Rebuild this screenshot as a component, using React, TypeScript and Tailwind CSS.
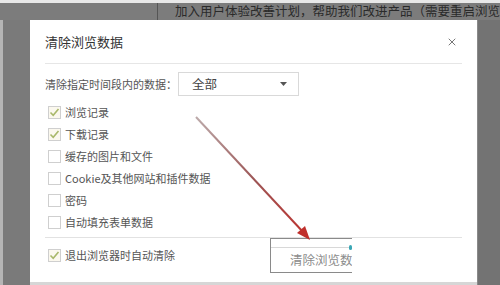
import { X } from 'lucide-react';

const items = [
  { label: '浏览记录', checked: true },
  { label: '下载记录', checked: true },
  { label: '缓存的图片和文件', checked: false },
  { label: 'Cookie及其他网站和插件数据', checked: false },
  { label: '密码', checked: false },
  { label: '自动填充表单数据', checked: false },
];

function Check({ checked }: { checked: boolean }) {
  return (
    <span
      className={`w-[13px] h-[13px] border border-[#cfcfcf] flex items-center justify-center shrink-0 ${
        checked ? 'bg-[#fbf8ee]' : 'bg-white'
      }`}
    >
      {checked && (
        <svg width="11" height="11" viewBox="0 0 11 11">
          <path d="M1.5 5.5 L4.2 8.2 L9.5 2" fill="none" stroke="#a9b86a" strokeWidth="1.6" />
        </svg>
      )}
    </span>
  );
}

export default function App() {
  return (
    <div
      className="w-[500px] h-[285px] bg-[#7c7c7c] relative overflow-hidden flex flex-col text-[#555]"
      style={{ fontFamily: '"Noto Sans CJK SC", "Noto Sans", sans-serif' }}
    >
      {/* Top background strip */}
      <div className="h-[3px] bg-[#e8e8e8] shrink-0" />
      <div className="h-[17px] flex items-center shrink-0 overflow-hidden">
        <span className="ml-[157px] w-[18px] h-[17px] border-l border-[#555] shrink-0" />
        <span className="text-[12.5px] leading-none text-[#2a2a2a] whitespace-nowrap">
          加入用户体验改善计划，帮助我们改进产品（需要重启浏览器）
        </span>
      </div>

      <div className="flex flex-1">
        <div className="w-[3px] bg-[#b5b5b5]" />
        <div className="w-[27px] bg-[#7a7a7a]" />

        {/* Dialog */}
        <div className="w-[447px] flex flex-col">
          <div className="h-[262px] bg-white flex flex-col px-[15px]">
            <div className="h-[44px] flex items-center justify-between border-b border-[#e6e6e6]">
              <span className="text-[13px] text-[#333]">清除浏览数据</span>
              <X className="w-[12px] h-[12px] text-[#777] mr-[4px]" strokeWidth={2} />
            </div>

            <div className="flex items-center mt-[8px] h-[24px]">
              <span className="text-[11px] w-[133px]">清除指定时间段内的数据：</span>
              <div className="w-[121px] h-[24px] border border-[#d9d9d9] flex items-center justify-between pl-[13px] pr-[11px]">
                <span className="text-[12.5px] text-[#444]">全部</span>
                <svg width="7" height="4" viewBox="0 0 7 4">
                  <path d="M0 0 L7 0 L3.5 4 Z" fill="#555" />
                </svg>
              </div>
            </div>

            <div className="flex flex-col mt-[5px] pl-[3px]">
              {items.map((it) => (
                <div key={it.label} className="h-[22px] flex items-center gap-[4px]">
                  <Check checked={it.checked} />
                  <span className="text-[11px]">{it.label}</span>
                </div>
              ))}
            </div>

            <div className="mt-[4px] border-t border-[#e2e2e2] flex items-start h-[35px]">
              <div className="flex items-center gap-[4px] pl-[3px] w-[225px] h-[34px]">
                <Check checked />
                <span className="text-[11px]">退出浏览器时自动清除</span>
              </div>
              <div className="w-[82px] h-[35px] border-l border-t border-b border-[#8a8a8a] overflow-hidden flex flex-col relative">
                <div className="h-[9px] border-b border-[#d8d8d8]" />
                <div className="flex-1 flex items-center pl-[19px]">
                  <span className="text-[12.5px] text-[#8c8c8c] whitespace-nowrap">清除浏览数据</span>
                </div>
                <span className="absolute right-0 top-[6px] w-[3px] h-[5px] bg-[#3aa7b5] rounded-full" />
              </div>
            </div>
          </div>
          <div className="flex-1 bg-[#d6d6d6]" />
        </div>

        <div className="flex-1 bg-[#737373] border-l border-[#8a8a8a]" />
      </div>

      {/* annotation arrow */}
      <svg className="absolute left-0 top-0" width="500" height="285">
        <defs>
          <linearGradient id="g" x1="196" y1="117" x2="310" y2="240" gradientUnits="userSpaceOnUse">
            <stop offset="0" stopColor="#bcaaaa" />
            <stop offset="0.5" stopColor="#9c5656" />
            <stop offset="1" stopColor="#c0302c" />
          </linearGradient>
        </defs>
        <line x1="196" y1="117" x2="304" y2="233" stroke="url(#g)" strokeWidth="2" />
        <path d="M310 240 L297 233 L305 226 Z" fill="#c0302c" />
      </svg>
    </div>
  );
}
